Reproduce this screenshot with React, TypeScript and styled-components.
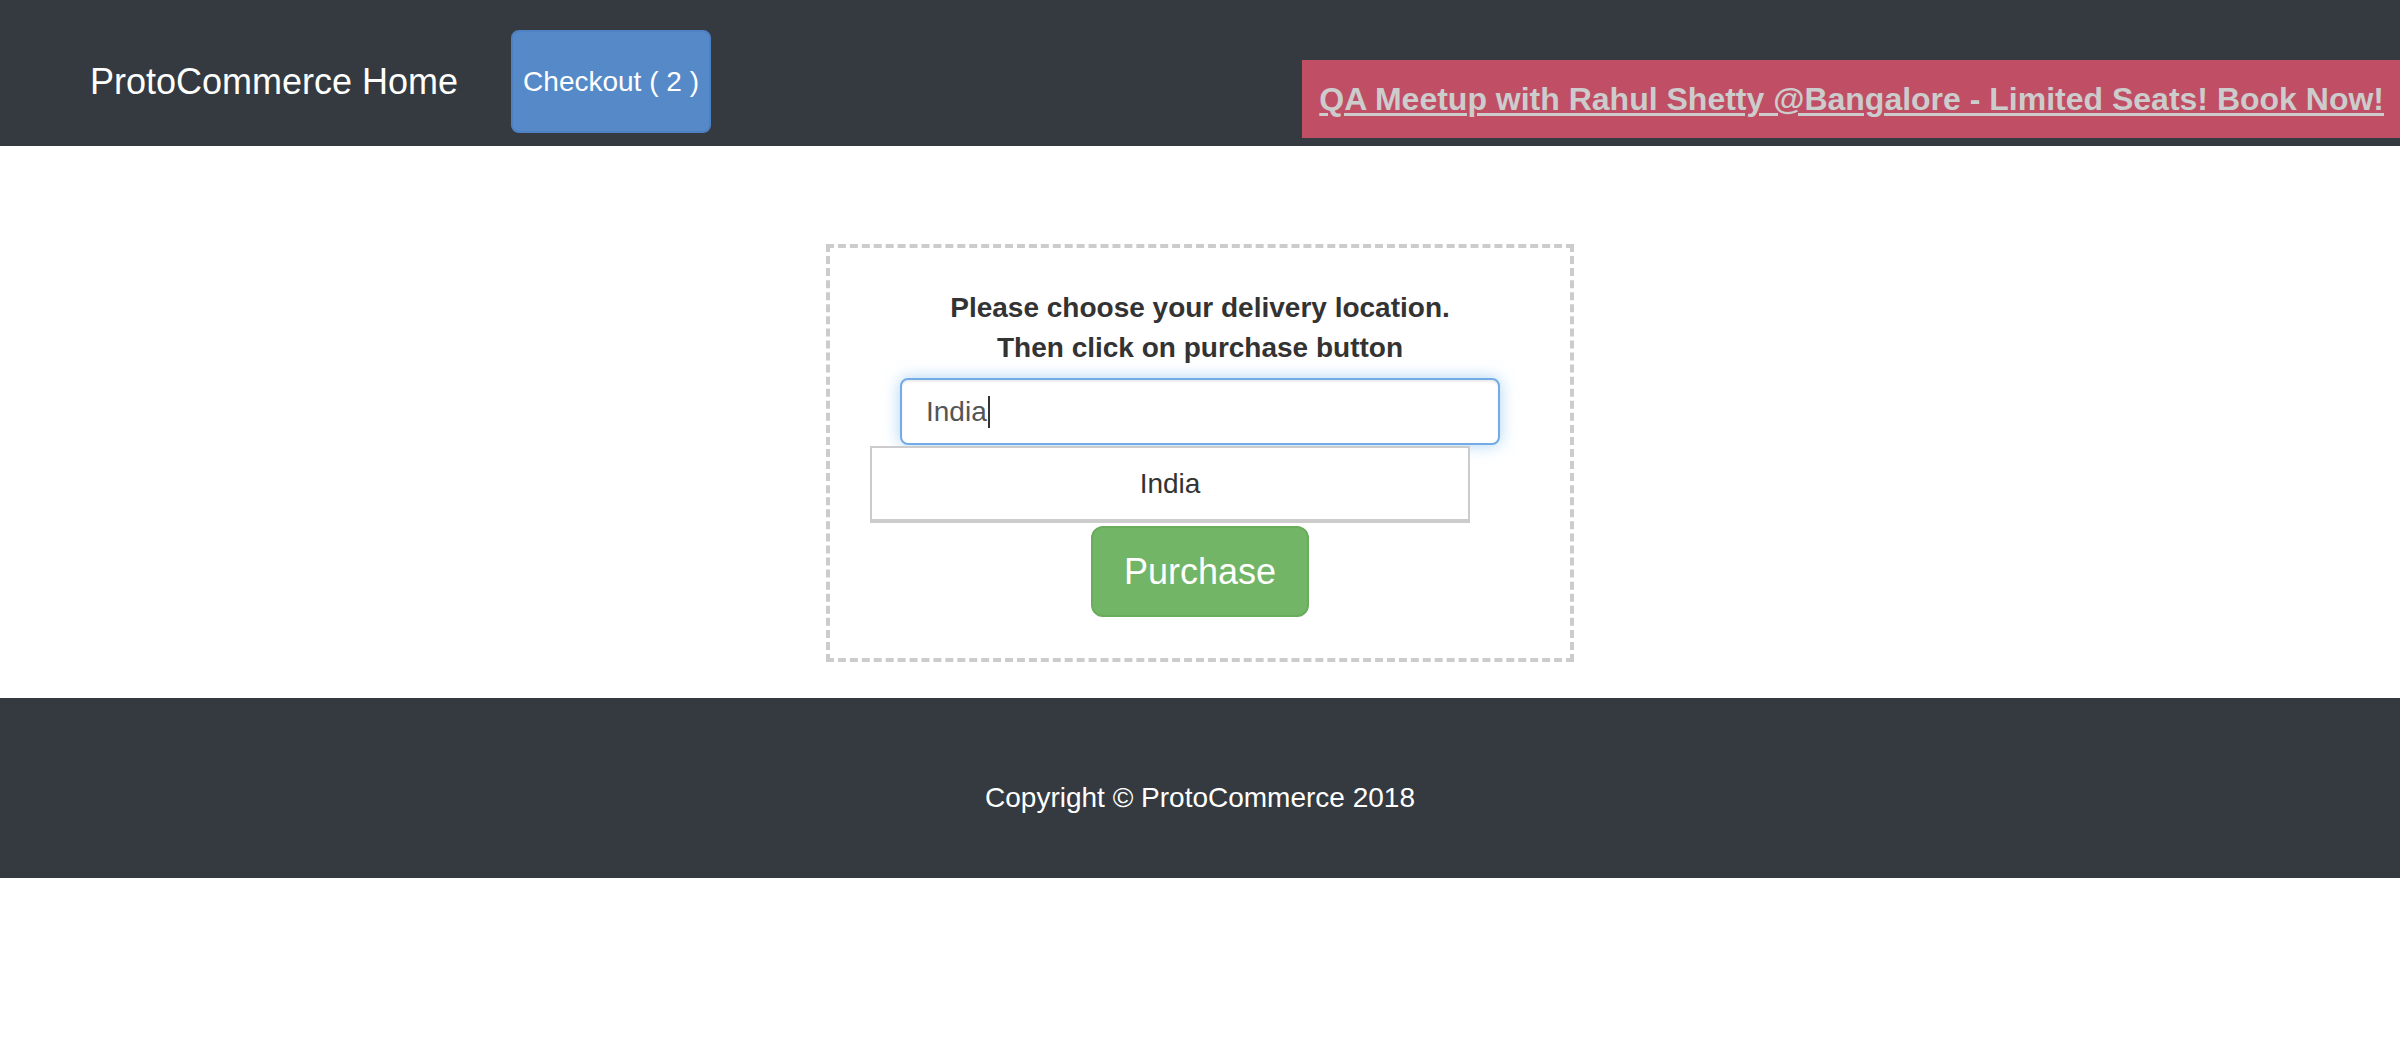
import React from "react";
import styled, { createGlobalStyle } from "styled-components";

const GlobalStyle = createGlobalStyle`
  html, body {
    margin: 0;
    padding: 0;
    background: #ffffff;
  }
  body {
    font-family: "Liberation Sans", Arial, Helvetica, sans-serif;
    font-size: 28px;
    line-height: 40px;
    color: #333333;
  }
  * {
    box-sizing: border-box;
  }
`;

const Page = styled.div`
  display: flex;
  flex-direction: column;
  width: 100%;
`;

const NavBar = styled.nav`
  display: flex;
  align-items: flex-start;
  height: 146px;
  padding: 30px 0 0 90px;
  background: #343a40;
`;

const Brand = styled.a`
  display: block;
  height: 103px;
  line-height: 103px;
  font-size: 36px;
  color: #ffffff;
  text-decoration: none;
  white-space: nowrap;
`;

const CheckoutButton = styled.button`
  display: flex;
  align-items: center;
  justify-content: center;
  height: 103px;
  margin-left: 53px;
  padding: 0 10px;
  font-family: inherit;
  font-size: 28px;
  color: #ffffff;
  background: #5589c8;
  border: 2px solid #4e81c1;
  border-radius: 8px;
  white-space: nowrap;
`;

const Banner = styled.a`
  display: block;
  margin: 30px 0 0 auto;
  height: 78px;
  line-height: 78px;
  padding: 0 16px 0 17px;
  font-size: 32px;
  font-weight: 700;
  color: #cccccc;
  background: #c04f66;
  text-decoration: underline;
  text-decoration-thickness: 3px;
  text-underline-offset: 3px;
  white-space: nowrap;
`;

const Main = styled.main`
  display: flex;
  justify-content: center;
  padding: 98px 0 36px;
`;

const LocationCard = styled.section`
  display: flex;
  flex-direction: column;
  align-items: flex-start;
  width: 748px;
  padding: 40px 0 41px;
  border: 4px dashed #cccccc;
`;

const Prompt = styled.p`
  align-self: stretch;
  margin: 0 0 10px;
  font-size: 28px;
  line-height: 40px;
  font-weight: 700;
  text-align: center;
  color: #333333;
`;

const Field = styled.div`
  display: flex;
  align-items: center;
  width: 600px;
  height: 67px;
  margin-left: 70px;
  padding: 0 24px;
  font-size: 28px;
  line-height: normal;
  color: #555555;
  background: #ffffff;
  border: 2px solid #72abe6;
  border-radius: 8px;
  box-shadow: inset 0 2px 2px rgba(0, 0, 0, 0.075),
    0 0 16px rgba(102, 175, 233, 0.55);
`;

const Caret = styled.span`
  display: inline-block;
  width: 2px;
  height: 32px;
  margin-left: 1px;
  background: #333333;
`;

const Suggestions = styled.ul`
  list-style: none;
  width: 600px;
  margin: 1px 0 0 40px;
  padding: 0;
  border: 2px solid #cccccc;
  border-bottom-width: 4px;
  background: #ffffff;
`;

const SuggestionItem = styled.li`
  height: 71px;
  line-height: 71px;
  font-size: 28px;
  text-align: center;
  color: #333333;
`;

const PurchaseButton = styled.button`
  align-self: center;
  width: 218px;
  height: 91px;
  margin-top: 3px;
  font-family: inherit;
  font-size: 36px;
  color: #ffffff;
  background: #73b566;
  border: 2px solid #69ad5c;
  border-radius: 12px;
`;

const Footer = styled.footer`
  height: 180px;
  padding-top: 80px;
  background: #343a40;
  text-align: center;
`;

const FooterText = styled.p`
  margin: 0;
  font-size: 28px;
  line-height: 40px;
  color: #ffffff;
`;

export default function App() {
  return (
    <Page>
      <GlobalStyle />
      <NavBar>
        <Brand href="#">ProtoCommerce Home</Brand>
        <CheckoutButton type="button">Checkout ( 2 )</CheckoutButton>
        <Banner href="#">
          QA Meetup with Rahul Shetty @Bangalore - Limited Seats! Book Now!
        </Banner>
      </NavBar>
      <Main>
        <LocationCard>
          <Prompt>
            Please choose your delivery location.
            <br />
            Then click on purchase button
          </Prompt>
          <Field>
            India
            <Caret />
          </Field>
          <Suggestions>
            <SuggestionItem>India</SuggestionItem>
          </Suggestions>
          <PurchaseButton type="button">Purchase</PurchaseButton>
        </LocationCard>
      </Main>
      <Footer>
        <FooterText>Copyright © ProtoCommerce 2018</FooterText>
      </Footer>
    </Page>
  );
}
